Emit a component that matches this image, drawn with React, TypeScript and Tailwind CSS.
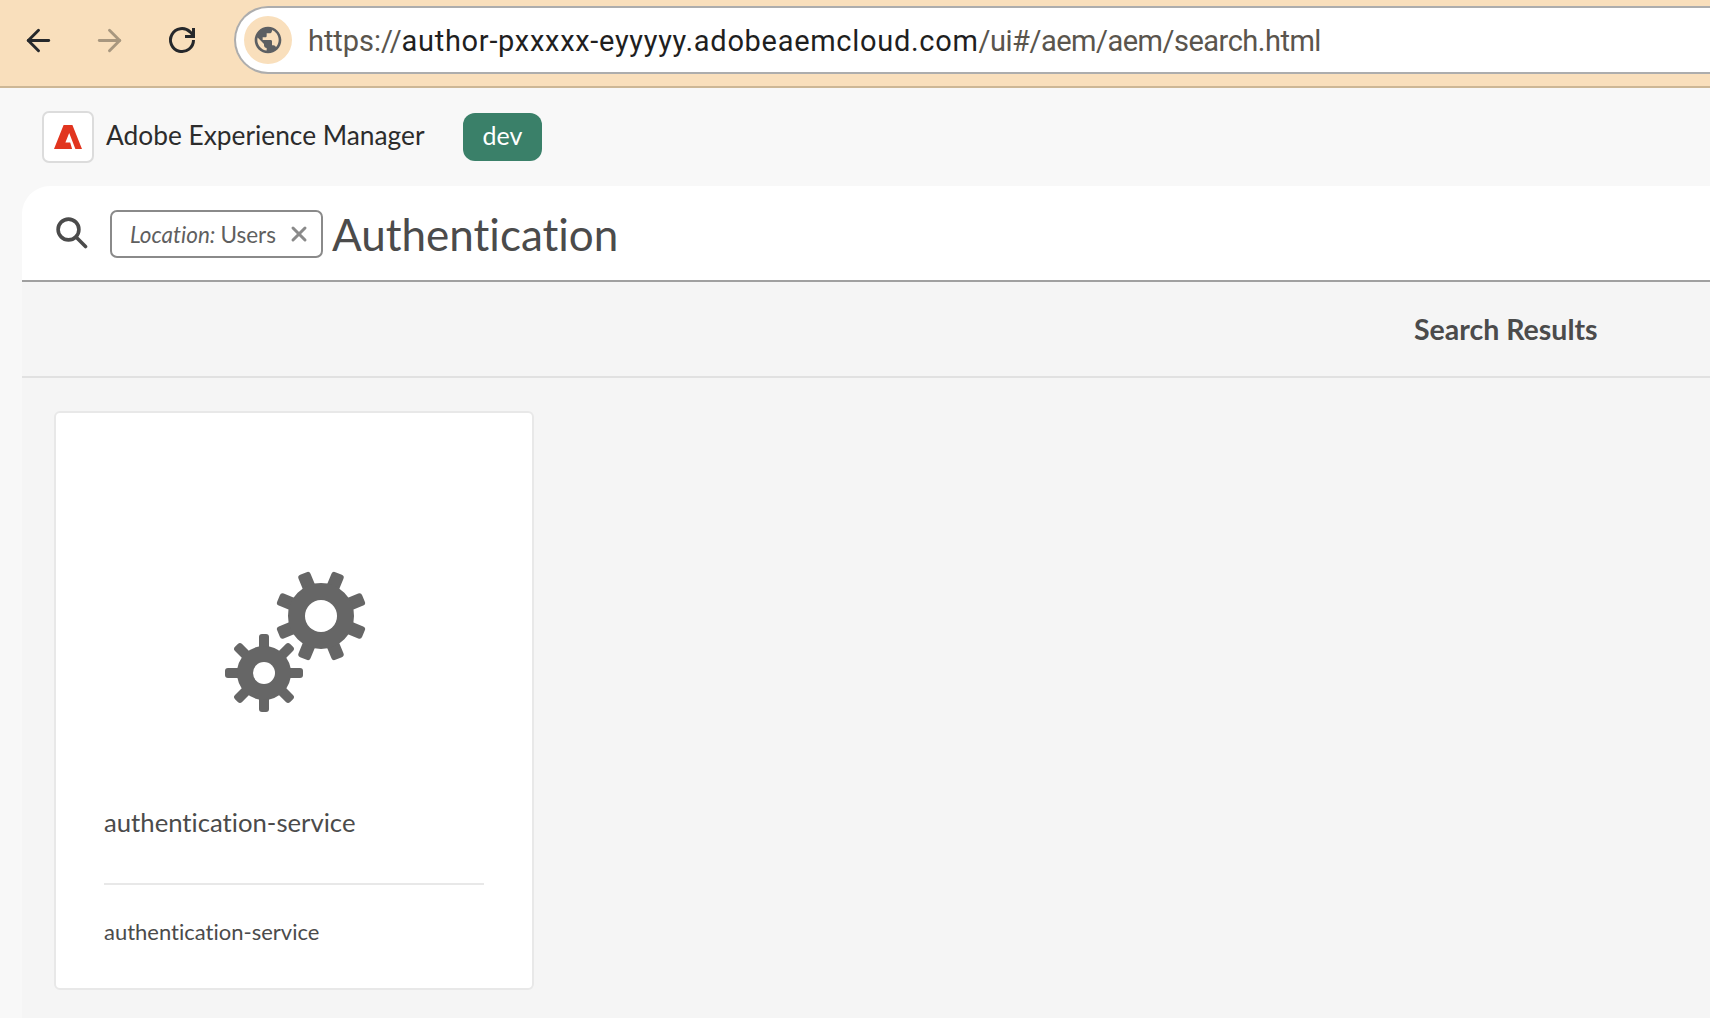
import React from 'react';
import { ArrowLeft, ArrowRight, X } from 'lucide-react';
import { MdPublic } from 'react-icons/md';

const Gear: React.FC<{ cx: number; cy: number; body: number; hole: number; tip: number; toothW: number; offset: number }> = ({ cx, cy, body, hole, tip, toothW, offset }) => {
  const angles = [0, 45, 90, 135, 180, 225, 270, 315];
  return (
    <g>
      {angles.map((a) => (
        <rect
          key={a}
          x={cx - toothW / 2}
          y={cy - tip}
          width={toothW}
          height={tip}
          rx={3}
          transform={`rotate(${a + offset} ${cx} ${cy})`}
          fill="#666666"
        />
      ))}
      <circle cx={cx} cy={cy} r={body - (body - hole) / 2} fill="none" stroke="#666666" strokeWidth={body - hole} />
      <circle cx={cx} cy={cy} r={hole} fill="#ffffff" />
    </g>
  );
};

const GearsIcon = () => (
  <svg width="150" height="150" viewBox="0 0 150 150">
    <Gear cx={102} cy={50} body={33} hole={16} tip={46} toothW={13} offset={22.5} />
    <Gear cx={45} cy={107} body={27} hole={11} tip={39} toothW={10} offset={0} />
  </svg>
);

const AdobeLogo = () => (
  <svg width="28" height="24" viewBox="0 0 28 24">
    <path fill="#e1351f" d="M9.6 0h8.8L28 24h-6.6L15.2 8 11.4 17.6h4.8l1.9 6.4H0z" />
  </svg>
);

const ReloadIcon = () => (
  <svg width="30" height="30" viewBox="0 0 30 30" fill="none" stroke="#26282b" strokeWidth="3">
    <path d="M26.5 15A11.5 11.5 0 1 1 23 6.8L26.5 10.5" />
    <path d="M26.5 3v8.5H18" />
  </svg>
);

const SearchIcon = () => (
  <svg width="32" height="32" viewBox="0 0 32 32" fill="none" stroke="#4b4b4b" strokeWidth="3.6" strokeLinecap="round">
    <circle cx="12.5" cy="12.5" r="10.4" />
    <path d="M20 20l9.5 9.5" />
  </svg>
);

export default function App() {
  return (
    <div className="w-[1710px] h-[1018px] overflow-hidden bg-[#f8f8f8] font-['Lato',sans-serif] [font-variant-ligatures:none]">
      {/* browser toolbar */}
      <div className="h-[88px] bg-[#f9dfbc] border-b-2 border-[#cdb796] flex items-center pb-[6px]">
        <div className="w-[234px] flex items-center shrink-0 pl-[21px]">
          <ArrowLeft className="w-[35px] h-[35px] text-[#26282b]" strokeWidth={2} />
          <ArrowRight className="ml-[36px] w-[35px] h-[35px] text-[#a8977f]" strokeWidth={2} />
          <div className="ml-[40px] flex"><ReloadIcon /></div>
        </div>
        <div className="flex-1 h-[68px] bg-white border-2 border-r-0 border-[#adadad] rounded-l-[34px] flex items-center pl-[8px]">
          <div className="w-[48px] h-[48px] rounded-full bg-[#f9dfbc] flex items-center justify-center">
            <MdPublic className="w-[32px] h-[32px] text-[#5c5f62]" />
          </div>
          <div className="ml-[16px] pt-[3px] text-[29px] text-[#1f1f1f] font-['Roboto',sans-serif]">
            <span className="text-[#5a554d] tracking-[-0.05px]">https://</span>
            <span className="tracking-[0.7px]">author-pxxxxx-eyyyyy.adobeaemcloud.com</span>
            <span className="text-[#5a554d] tracking-[-0.5px]">/ui#/aem/aem/search.html</span>
          </div>
        </div>
      </div>

      {/* AEM header */}
      <div className="h-[98px] flex items-center pl-[42px]">
        <div className="w-[52px] h-[52px] bg-white border-2 border-[#dcdcdc] rounded-[7px] flex items-center justify-center">
          <AdobeLogo />
        </div>
        <div className="ml-[12px] w-[357px] pb-[2px] text-[26.3px] text-[#2c2c2c]">Adobe Experience Manager</div>
        <div className="w-[79px] h-[48px] bg-[#3a8069] rounded-[12px] flex items-center justify-center pb-[2px] text-white text-[25px]">dev</div>
      </div>

      {/* main panel */}
      <div className="ml-[22px]">
        <div className="h-[96px] bg-white rounded-tl-[28px] border-b-2 border-[#a0a0a0] flex items-center pl-[34px]">
          <SearchIcon />
          <div className="ml-[22px] mt-[1px] w-[213px] h-[48px] border-2 border-[#8a8a8a] rounded-[7px] flex items-center pl-[18px] text-[22.5px] text-[#5f5f5f]">
            <span className="italic pt-[2px]">Location:</span>
            <span className="ml-[5px] pt-[2px]">Users</span>
            <X className="ml-auto mr-[10px] w-[24px] h-[24px] text-[#8a8a8a]" strokeWidth={3} />
          </div>
          <div className="ml-[9px] pt-[2px] text-[44px] text-[#4b4b4b]">Authentication</div>
        </div>
        <div className="h-[96px] bg-[#f5f5f5] border-b-2 border-[#e1e1e1] flex items-center pl-[1392px]">
          <div className="text-[28.5px] font-bold text-[#4b4b4b]">Search Results</div>
        </div>
        <div className="h-[640px] bg-[#f5f5f5] pl-[32px] pt-[33px]">
          <div className="w-[480px] h-[579px] bg-white border-2 border-[#e8e8e8] rounded-[6px] flex flex-col">
            <div className="pt-[153px] flex justify-center">
              <GearsIcon />
            </div>
            <div className="mt-[86px] ml-[48px] h-[40px] leading-[40px] text-[25.7px] text-[#4b4b4b]">authentication-service</div>
            <div className="mx-[48px] mt-[41px] h-[2px] bg-[#e8e8e8]" />
            <div className="mt-[31px] ml-[48px] h-[32px] leading-[32px] text-[22px] text-[#4b4b4b]">authentication-service</div>
          </div>
        </div>
      </div>
    </div>
  );
}
